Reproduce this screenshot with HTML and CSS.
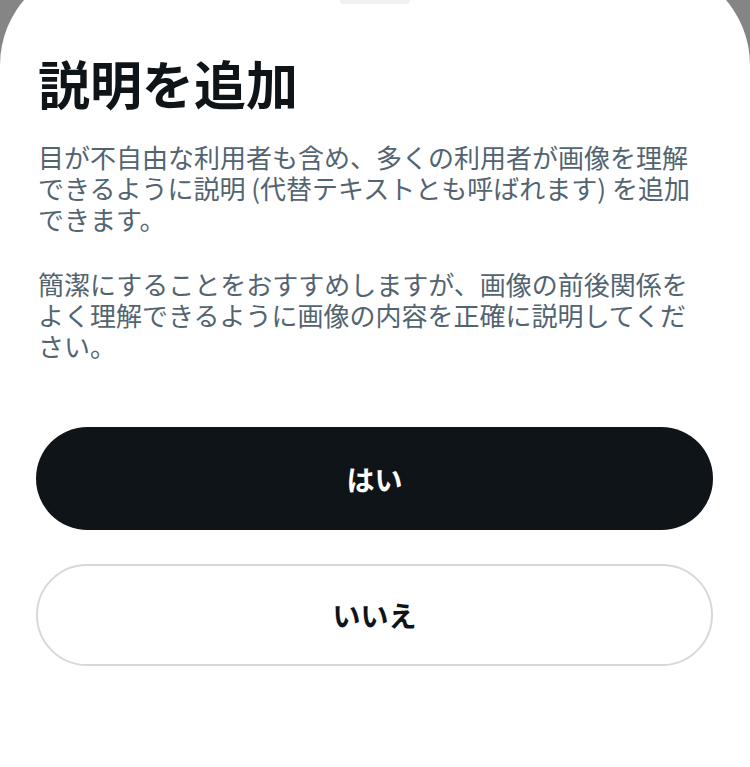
FILE: index.html
```html
<!DOCTYPE html>
<html lang="ja">
  <head>
    <meta charset="UTF-8" />
    <meta name="viewport" content="width=device-width, initial-scale=1.0" />
    <title>説明を追加</title>
    <link rel="stylesheet" href="styles.css">
  </head>
  <body>
    <div class="sheet">
      <div class="handle"></div>
      <div class="content">
        <h1 class="title">説明を追加</h1>
        <p class="desc">目が不自由な利用者も含め、多くの利用者が画像を理解できるように説明 (代替テキストとも呼ばれます) を追加できます。</p>
        <p class="desc">簡潔にすることをおすすめしますが、画像の前後関係をよく理解できるように画像の内容を正確に説明してください。</p>
        <div class="actions">
          <button class="btn btn-primary">はい</button>
          <button class="btn btn-outline">いいえ</button>
        </div>
      </div>
    </div>
  </body>
</html>
```

FILE: styles.css
```css
body {
  margin: 0;
  background-color: #858585; /* dimmed backdrop behind the sheet */
  font-family: "Noto Sans CJK JP", "Noto Sans", sans-serif;
  height: 767px;
  overflow: hidden;
}

.sheet {
  margin-top: -35px;
  background-color: #ffffff;
  border-radius: 100px 100px 0 0;
  height: 802px;
  display: flex;
  flex-direction: column;
  align-items: center;
}

.handle {
  margin-top: 31px;
  width: 70px;
  height: 8px;
  border-radius: 4px;
  background-color: #eff1f3;
}

.content {
  align-self: stretch;
  padding: 0 37px 0 36px;
}

.title {
  margin: 48px 0 0;
  padding-left: 2px;
  font-size: 52px;
  line-height: 62px;
  font-weight: 700;
  color: #0f1419;
}

.desc {
  max-width: 668px;
  margin: 27px 0 0;
  padding-left: 2px;
  font-size: 26px;
  line-height: 31px;
  color: #536471;
}

.desc + .desc {
  margin-top: 34px;
}

.actions {
  margin-top: 66px;
  display: flex;
  flex-direction: column;
  gap: 34px;
}

.btn {
  height: 103px;
  border-radius: 52px;
  font-family: inherit;
  font-size: 28px;
  font-weight: 700;
  cursor: pointer;
}

.btn-primary {
  background-color: #0f1419;
  color: #ffffff;
  border: none;
}

.btn-outline {
  height: 102px;
  background-color: #ffffff;
  color: #0f1419;
  border: 2px solid #d4d9dd;
}
```
